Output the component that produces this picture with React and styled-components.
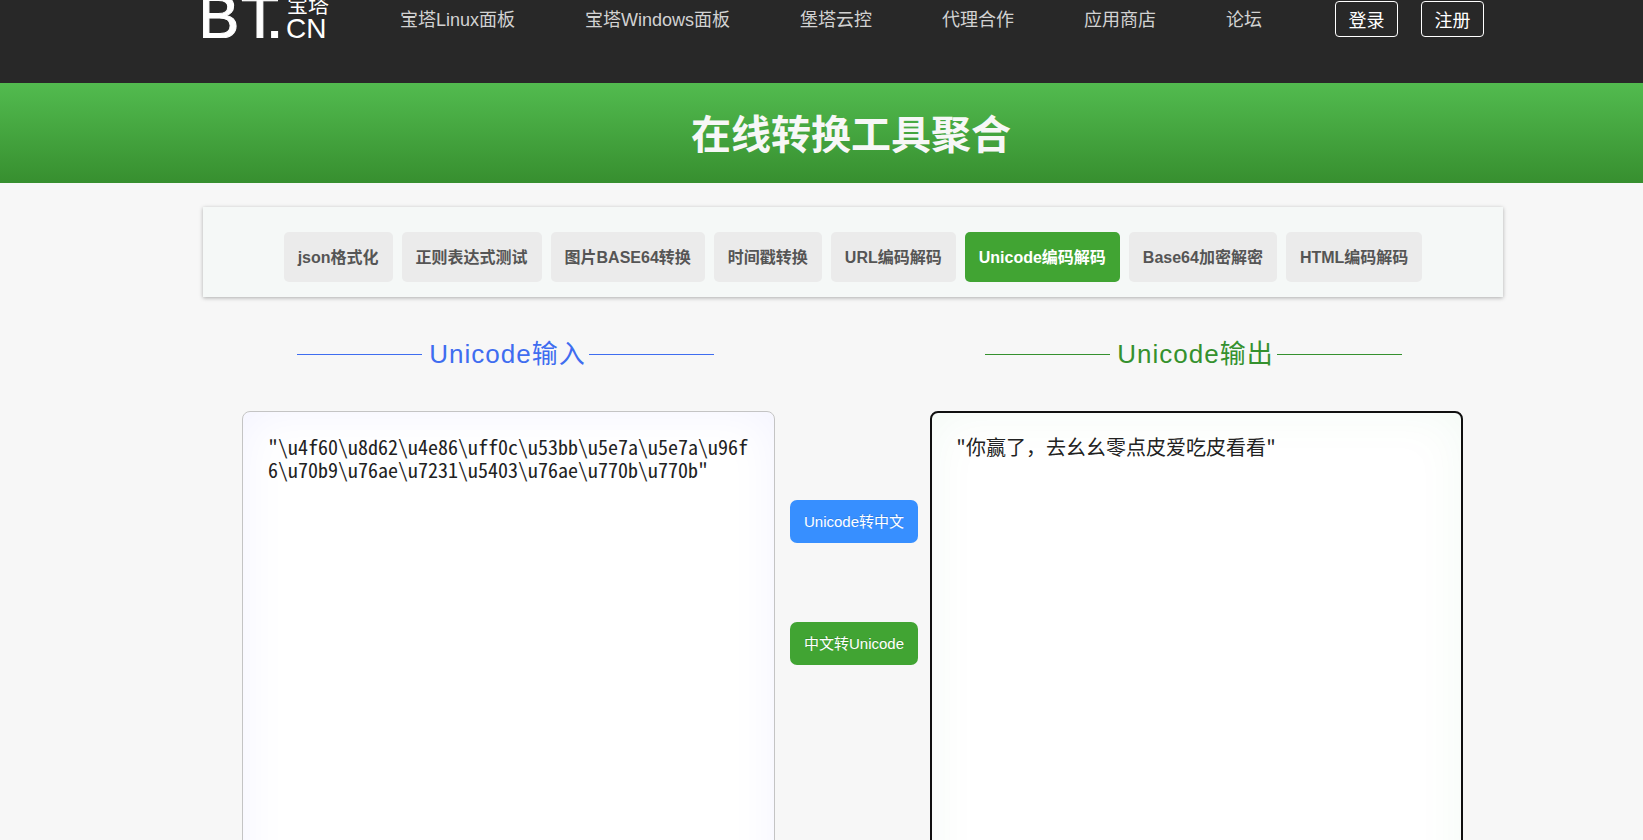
import React, { useState } from "react";
import styled, { createGlobalStyle } from "styled-components";

const GlobalStyle = createGlobalStyle`
  *, *::before, *::after { box-sizing: border-box; }
  body {
    margin: 0;
    background: #f7f7f7;
    font-family: "Liberation Sans", "Noto Sans CJK SC", sans-serif;
  }
`;

const Page = styled.div`
  height: 100vh;
  overflow: hidden;
`;

const Band = styled.div`
  padding-left: 63px;
`;

const Container = styled.div`
  width: 100%;
  max-width: 1300px;
  margin: 0 auto;
`;

const Header = styled(Band).attrs({ as: "header" })`
  height: 83px;
  background: #282828;
`;

const HeaderRow = styled(Container)`
  display: flex;
  align-items: center;
  height: 38px;
`;

const LogoLink = styled.a`
  display: block;
  height: 38px;
  margin-right: 67px;
  svg { display: block; }
`;

const Nav = styled.nav`
  display: flex;
  gap: 70px;
  padding-top: 2px;
`;

const NavLink = styled.a`
  color: #d2d2d2;
  font-size: 18px;
  line-height: 24px;
  white-space: nowrap;
  text-decoration: none;
`;

const Account = styled.div`
  display: flex;
  gap: 23px;
  margin-left: auto;
  margin-right: 19px;
`;

const AccountLink = styled.a`
  display: flex;
  align-items: center;
  justify-content: center;
  width: 63px;
  height: 36px;
  border: 1px solid #fff;
  border-radius: 4px;
  color: #fff;
  font-size: 18px;
  text-decoration: none;
`;

const Banner = styled(Band)`
  height: 100px;
  background: linear-gradient(#52bb4f, #378f2f);
`;

const Title = styled.h1`
  margin: 0;
  padding-right: 4px;
  color: #f7f7f7;
  font-size: 40px;
  line-height: 104px;
  font-weight: 700;
  text-align: center;
`;

const TabCard = styled(Container).attrs({ as: "nav" })`
  display: flex;
  justify-content: center;
  gap: 9px;
  margin-top: 24px;
  padding: 25px 0 15px;
  background: #f5f8f7;
  box-shadow: 0 1px 4px rgba(0, 0, 0, 0.3);
`;

const Tab = styled.a`
  padding: 2px 14px 0;
  border-radius: 5px;
  background: ${(p) => (p.$active ? "#41a433" : "#ebebeb")};
  color: ${(p) => (p.$active ? "#fff" : "#555")};
  font-size: 16px;
  line-height: 48px;
  font-weight: 700;
  white-space: nowrap;
  text-decoration: none;
`;

const Converter = styled(Container)`
  display: flex;
  padding: 0 40px 0 39px;
`;

const Panel = styled.section`
  flex: 1;
  min-width: 0;
  display: flex;
  flex-direction: column;
`;

const PanelHeading = styled.label`
  display: flex;
  align-items: center;
  justify-content: center;
  gap: 3px;
  height: 34px;
  margin: 40px 0;
  padding-right: 6px;
  color: ${(p) => p.$color};
  font-size: 26px;
  line-height: 34px;
  letter-spacing: 1px;
  white-space: nowrap;

  &::before,
  &::after {
    content: "";
    width: 125px;
    height: 1px;
    background: currentColor;
  }
  &::before { margin-right: 4px; }
`;

const CodeArea = styled.textarea`
  display: block;
  width: 100%;
  height: 600px;
  padding: ${(p) => (p.$focused ? "22px 24px" : "23px 25px")};
  border: ${(p) => (p.$focused ? "2px solid #101010" : "1px solid #c4c4c4")};
  border-radius: 8px;
  outline: none;
  resize: none;
  background: #fff;
  box-shadow: inset 0 0 50px ${(p) => p.$glow};
  color: #222;
  font-family: "Noto Sans Mono CJK SC", "Noto Sans CJK SC", monospace;
  font-weight: 300;
  font-size: 20px;
  line-height: 23px;
  word-break: break-all;
`;

const Actions = styled.div`
  display: flex;
  flex-direction: column;
  gap: 79px;
  padding: 203px 12px 0 15px;
`;

const ActionButton = styled.button`
  width: 128px;
  height: 43px;
  padding: 0 0 2px;
  border: 0;
  border-radius: 7px;
  background: ${(p) => p.$color};
  color: #fff;
  font-family: inherit;
  font-size: 15px;
  text-shadow: 0 -1px 0 rgba(0, 0, 0, 0.12);
  cursor: pointer;
`;

const NAV = ["宝塔Linux面板", "宝塔Windows面板", "堡塔云控", "代理合作", "应用商店", "论坛"];
const TABS = [
  "json格式化",
  "正则表达式测试",
  "图片BASE64转换",
  "时间戳转换",
  "URL编码解码",
  "Unicode编码解码",
  "Base64加密解密",
  "HTML编码解码",
];

const escaped =
  '"\\u4f60\\u8d62\\u4e86\\uff0c\\u53bb\\u5e7a\\u5e7a\\u96f6\\u70b9\\u76ae\\u7231\\u5403\\u76ae\\u770b\\u770b"';

const decode = (s) => s.replace(/\\u([0-9a-f]{4})/gi, (_, h) => String.fromCharCode(parseInt(h, 16)));
const encode = (s) =>
  s.replace(/[^\x00-\x7f]/g, (c) => "\\u" + c.charCodeAt(0).toString(16).padStart(4, "0"));

function Logo() {
  return (
    <svg width="130" height="38" viewBox="0 0 130 38" fill="#fff" aria-label="宝塔 BT.CN">
      <g fontFamily="Liberation Sans, sans-serif">
        <g fontSize="62" stroke="#fff" strokeWidth="1">
          <text x="-5" y="38">B</text>
          <text x="38" y="38">T</text>
          <text x="63" y="38">.</text>
        </g>
        <text x="83" y="38" fontSize="28">CN</text>
      </g>
      <text x="84" y="12" fontSize="21" fontFamily="Noto Sans CJK SC, sans-serif">宝塔</text>
    </svg>
  );
}

export default function App() {
  const [input, setInput] = useState(escaped);
  const [output, setOutput] = useState(decode(escaped));
  return (
    <Page>
      <GlobalStyle />
      <Header>
        <HeaderRow>
          <LogoLink href="#"><Logo /></LogoLink>
          <Nav>
            {NAV.map((n) => <NavLink key={n} href="#">{n}</NavLink>)}
          </Nav>
          <Account>
            <AccountLink href="#">登录</AccountLink>
            <AccountLink href="#">注册</AccountLink>
          </Account>
        </HeaderRow>
      </Header>
      <Banner>
        <Title>在线转换工具聚合</Title>
      </Banner>
      <Band>
        <TabCard>
          {TABS.map((t) => (
            <Tab key={t} href="#" $active={t === "Unicode编码解码"}>{t}</Tab>
          ))}
        </TabCard>
        <Converter>
          <Panel>
            <PanelHeading htmlFor="source" $color="#3f6df0">Unicode输入</PanelHeading>
            <CodeArea
              id="source"
              spellCheck={false}
              $glow="rgba(0, 0, 255, 0.05)"
              value={input}
              onChange={(e) => setInput(e.target.value)}
            />
          </Panel>
          <Actions>
            <ActionButton type="button" $color="#378fff" onClick={() => setOutput(decode(input))}>
              Unicode转中文
            </ActionButton>
            <ActionButton type="button" $color="#41a433" onClick={() => setOutput(encode(input))}>
              中文转Unicode
            </ActionButton>
          </Actions>
          <Panel>
            <PanelHeading htmlFor="result" $color="#35912e">Unicode输出</PanelHeading>
            <CodeArea
              id="result"
              spellCheck={false}
              $focused
              $glow="rgba(0, 160, 60, 0.05)"
              value={output}
              onChange={(e) => setOutput(e.target.value)}
            />
          </Panel>
        </Converter>
      </Band>
    </Page>
  );
}
